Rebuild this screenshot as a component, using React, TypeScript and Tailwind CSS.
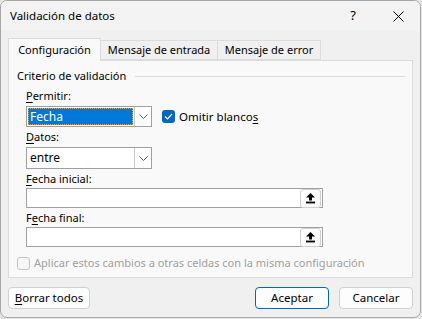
import React from "react";

const font = { fontFamily: '"Segoe UI", "Noto Sans", "Open Sans", sans-serif' };

function U({ children }: { children: React.ReactNode }) {
  return <span className="underline underline-offset-2 decoration-[1px]">{children}</span>;
}

function Chevron() {
  return (
    <svg width="9" height="5" viewBox="0 0 9 5" fill="none">
      <path d="M0.5 0.5 L4.5 4.5 L8.5 0.5" stroke="#606060" strokeWidth="1" />
    </svg>
  );
}

function RefBtn() {
  return (
    <div className="w-[21px] h-[19px] mr-[1px] rounded-[3px] border border-[#d0d0d0] bg-[#fdfdfd] flex items-center justify-center">
      <svg width="11" height="12" viewBox="0 0 11 12">
        <path d="M5.5 1 L10 5.6 L7 5.6 L7 8.4 L4 8.4 L4 5.6 L1 5.6 Z" fill="#000" />
        <rect x="1" y="9.6" width="9" height="1.8" fill="#000" />
      </svg>
    </div>
  );
}

export default function App() {
  return (
    <div className="w-[422px] h-[319px] bg-[#e6e6e6] text-[11px] text-black" style={font}>
      <div className="w-[421px] h-[318px] rounded-[7px] border border-[#a8a8a8] bg-[#f0f0f0] overflow-hidden flex flex-col">
        {/* Title bar */}
        <div className="h-[30px] bg-[#f3f3f3] flex items-center pl-[9px] shrink-0">
          <span className="text-[11.5px] text-black">Validación de datos</span>
          <span className="ml-auto mr-[37px] text-[13px] text-black">?</span>
          <svg className="mr-[16px]" width="11" height="11" viewBox="0 0 11 11">
            <path d="M0.5 0.5 L10.5 10.5 M10.5 0.5 L0.5 10.5" stroke="#000" strokeWidth="1" />
          </svg>
        </div>
        {/* Body */}
        <div className="flex-1 flex flex-col px-[7px] pt-[7px]">
          {/* Tabs */}
          <div className="flex items-end h-[23px] relative z-10">
            <div className="h-[23px] w-[93px] bg-[#f9f9f9] border border-b-0 border-[#dcdcdc] flex items-center justify-center text-black">
              Configuración
            </div>
            <div className="h-[20px] mb-[1px] w-[117px] bg-[#f0f0f0] border border-l-0 border-[#dcdcdc] flex items-center justify-center text-black">
              Mensaje de entrada
            </div>
            <div className="h-[20px] mb-[1px] w-[103px] bg-[#f0f0f0] border border-l-0 border-[#dcdcdc] flex items-center justify-center text-black">
              Mensaje de error
            </div>
          </div>
          {/* Panel */}
          <div className="h-[218px] -mt-[1px] bg-[#f9f9f9] border border-[#dcdcdc] flex flex-col pl-[8px] pr-[7px] pt-[7px]">
            <div className="flex items-center h-[16px]">
              <span>Criterio de validación</span>
              <div className="flex-1 ml-[9px] h-[1px] bg-[#dcdcdc]" />
            </div>
            <div className="pl-[9px] flex flex-col">
              <div className="h-[16px] mt-[4px] leading-[16px]"><U>P</U>ermitir:</div>
              <div className="flex items-center mt-[2px]">
                <div className="w-[126px] h-[21px] border border-[#a0a0a0] bg-white flex items-stretch">
                  <div className="flex-1 m-[1px] bg-[#0078d7] outline outline-1 outline-dotted outline-[#f0a040] -outline-offset-1 text-white flex items-center pl-[2px] text-[12px]">
                    Fecha
                  </div>
                  <div className="w-[17px] border-l border-[#c8c8c8] flex items-center justify-center">
                    <Chevron />
                  </div>
                </div>
                <div className="ml-[10px] w-[13px] h-[13px] rounded-[3px] bg-[#0067c0] flex items-center justify-center">
                  <svg width="9" height="7" viewBox="0 0 9 7">
                    <path d="M1 3.5 L3.5 6 L8 1" stroke="#fff" strokeWidth="1.2" fill="none" />
                  </svg>
                </div>
                <span className="ml-[4px] text-[11.5px]">Omitir blanco<U>s</U></span>
              </div>
              <div className="h-[16px] mt-[2px] leading-[16px]"><U>D</U>atos:</div>
              <div className="mt-[2px] w-[126px] h-[22px] border border-[#a0a0a0] bg-white flex items-stretch">
                <div className="flex-1 flex items-center pl-[3px] text-[12px]">entre</div>
                <div className="w-[17px] border-l border-[#c8c8c8] flex items-center justify-center">
                  <Chevron />
                </div>
              </div>
              <div className="h-[16px] mt-[2px] leading-[16px]"><U>F</U>echa inicial:</div>
              <div className="mt-[1px] w-[297px] h-[20px] border border-[#a0a0a0] bg-white flex items-center justify-end">
                <RefBtn />
              </div>
              <div className="h-[16px] mt-[2px] leading-[16px]">F<U>e</U>cha final:</div>
              <div className="mt-[1px] w-[297px] h-[20px] border border-[#a0a0a0] bg-white flex items-center justify-end">
                <RefBtn />
              </div>
            </div>
            <div className="flex items-center mt-[8px] h-[16px]">
              <div className="w-[13px] h-[13px] rounded-[3px] border border-[#c4c4c4] bg-[#f7f7f7]" />
              <span className="ml-[4px] text-[#a0a0a0]">Aplicar estos cambios a otras celdas con la misma configuración</span>
            </div>
          </div>
          {/* Buttons */}
          <div className="flex items-center mt-[9px]">
            <button className="w-[82px] h-[22px] rounded-[4px] border border-[#d0d0d0] bg-[#fdfdfd] text-black text-[11.5px]">
              <U>B</U>orrar todos
            </button>
            <button className="ml-auto w-[74px] h-[22px] rounded-[4px] border border-[#0067c0] bg-[#fdfdfd] text-black text-[11.5px]">
              Aceptar
            </button>
            <button className="ml-[10px] w-[74px] h-[22px] rounded-[4px] border border-[#d0d0d0] bg-[#fdfdfd] text-black text-[11.5px]">
              Cancelar
            </button>
          </div>
        </div>
      </div>
    </div>
  );
}
